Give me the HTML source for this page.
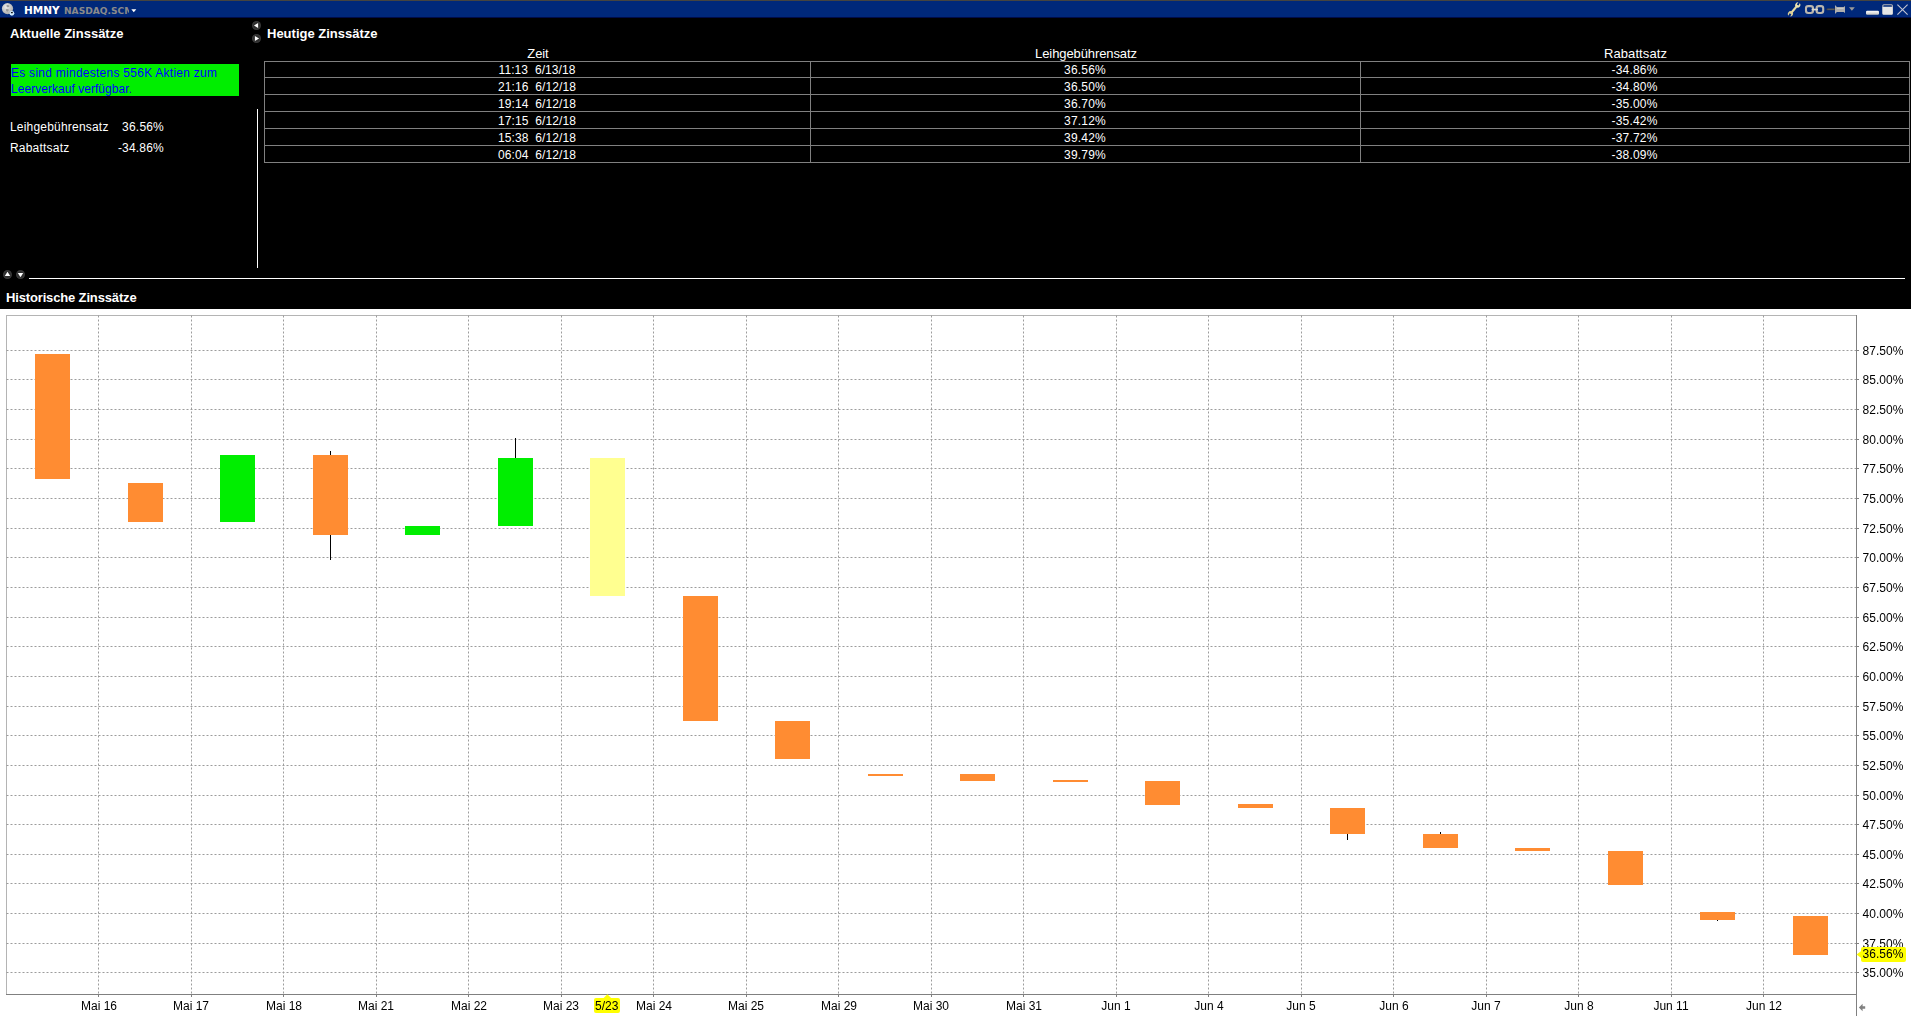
<!DOCTYPE html>
<html lang="de"><head><meta charset="utf-8"><title>HMNY</title>
<style>
html,body{margin:0;padding:0;}
body{width:1911px;height:1019px;overflow:hidden;background:#fff;position:relative;font-family:"Liberation Sans",sans-serif;font-size:12px;color:#fff;}
.abs{position:absolute;white-space:nowrap;}
.gfx{position:absolute;left:0;top:0;}
.top0{left:0;top:0;width:1911px;height:1px;background:#464440;}
.bar{left:0;top:1px;width:1911px;height:17px;background:#00287a;}
.bar2{left:0;top:17px;width:1911px;height:1px;background:#000c48;}
.panel{left:0;top:18px;width:1911px;height:291px;background:#000;}
.h{font-weight:bold;font-size:13px;line-height:16px;color:#fff;}
.t{font-size:12px;line-height:14px;color:#fff;letter-spacing:0.2px;}
.th{font-size:13px;line-height:14px;color:#fff;letter-spacing:-0.1px;}
.c{text-align:center;}
.yl{font-size:12px;line-height:14px;color:#000;left:1862.4px;letter-spacing:0.08px;}
.xl{font-size:12px;line-height:14px;color:#000;text-align:center;width:80px;}
.tbl{left:264px;top:61px;width:1646px;height:102px;}
.hl{background:#808080;height:1px;left:264px;width:1646px;}
.vl{background:#808080;width:1px;top:61px;height:102px;}
</style></head><body>
<div class="abs top0"></div><div class="abs bar"></div><div class="abs bar2"></div><div class="abs panel"></div>

<div class="abs" style="left:24px;top:4px;font-family:'DejaVu Sans','Liberation Sans',sans-serif;font-weight:bold;font-size:10.5px;line-height:13px;color:#fff;">HMNY</div>
<div class="abs" style="left:64px;top:5px;width:65px;overflow:hidden;font-family:'DejaVu Sans','Liberation Sans',sans-serif;font-weight:bold;font-size:9.1px;line-height:13px;color:#8a8a8a;">NASDAQ.SCM</div>
<div class="abs h" style="left:10px;top:26px;">Aktuelle Zinssätze</div>
<div class="abs h" style="left:267px;top:26px;">Heutige Zinssätze</div>
<div class="abs h" style="left:6px;top:290px;letter-spacing:-0.15px;">Historische Zinssätze</div>
<div class="abs" style="left:11px;top:64px;width:228px;height:32px;background:#00ee00;color:#0000ff;font-size:12px;line-height:16px;white-space:normal;letter-spacing:0.2px;padding-top:1px;box-sizing:border-box;"><span style="display:block;letter-spacing:0.26px;">Es sind mindestens 556K Aktien zum</span><span style="display:block;letter-spacing:0.04px;">Leerverkauf verfügbar.</span></div>
<div class="abs t" style="left:10px;top:120px;">Leihgebührensatz</div>
<div class="abs t" style="left:100px;top:120px;width:64px;text-align:right;">36.56%</div>
<div class="abs t" style="left:10px;top:141px;">Rabattsatz</div>
<div class="abs t" style="left:100px;top:141px;width:64px;text-align:right;">-34.86%</div>
<div class="abs" style="left:257px;top:109px;width:1px;height:159px;background:#fff;"></div>
<div class="abs" style="left:29px;top:278px;width:1876px;height:1px;background:#fff;"></div>
<div class="abs hl" style="top:61px;"></div>
<div class="abs hl" style="top:77px;"></div>
<div class="abs hl" style="top:94px;"></div>
<div class="abs hl" style="top:111px;"></div>
<div class="abs hl" style="top:128px;"></div>
<div class="abs hl" style="top:145px;"></div>
<div class="abs hl" style="top:162px;"></div>
<div class="abs vl" style="left:264px;"></div>
<div class="abs vl" style="left:810px;"></div>
<div class="abs vl" style="left:1360px;"></div>
<div class="abs vl" style="left:1909px;"></div>
<div class="abs th c" style="left:265px;width:546px;top:47px;">Zeit</div>
<div class="abs th c" style="left:811px;width:550px;top:47px;">Leihgebührensatz</div>
<div class="abs th c" style="left:1361px;width:549px;top:47px;letter-spacing:0.1px;">Rabattsatz</div>
<div class="abs t c" style="left:264px;width:546px;top:63px;white-space:pre;letter-spacing:0.08px;">11:13  6/13/18</div>
<div class="abs t c" style="left:810px;width:550px;top:63px;">36.56%</div>
<div class="abs t c" style="left:1360px;width:549px;top:63px;">-34.86%</div>
<div class="abs t c" style="left:264px;width:546px;top:80px;white-space:pre;letter-spacing:0.08px;">21:16  6/12/18</div>
<div class="abs t c" style="left:810px;width:550px;top:80px;">36.50%</div>
<div class="abs t c" style="left:1360px;width:549px;top:80px;">-34.80%</div>
<div class="abs t c" style="left:264px;width:546px;top:97px;white-space:pre;letter-spacing:0.08px;">19:14  6/12/18</div>
<div class="abs t c" style="left:810px;width:550px;top:97px;">36.70%</div>
<div class="abs t c" style="left:1360px;width:549px;top:97px;">-35.00%</div>
<div class="abs t c" style="left:264px;width:546px;top:114px;white-space:pre;letter-spacing:0.08px;">17:15  6/12/18</div>
<div class="abs t c" style="left:810px;width:550px;top:114px;">37.12%</div>
<div class="abs t c" style="left:1360px;width:549px;top:114px;">-35.42%</div>
<div class="abs t c" style="left:264px;width:546px;top:131px;white-space:pre;letter-spacing:0.08px;">15:38  6/12/18</div>
<div class="abs t c" style="left:810px;width:550px;top:131px;">39.42%</div>
<div class="abs t c" style="left:1360px;width:549px;top:131px;">-37.72%</div>
<div class="abs t c" style="left:264px;width:546px;top:148px;white-space:pre;letter-spacing:0.08px;">06:04  6/12/18</div>
<div class="abs t c" style="left:810px;width:550px;top:148px;">39.79%</div>
<div class="abs t c" style="left:1360px;width:549px;top:148px;">-38.09%</div>
<svg class="gfx" width="1911" height="1019" viewBox="0 0 1911 1019">
<g shape-rendering="crispEdges">
<rect x="6" y="315" width="1851" height="1" fill="#b4b4b4"/>
<rect x="6" y="315" width="1" height="680" fill="#b4b4b4"/>
<rect x="6" y="994" width="1851" height="1" fill="#808080"/>
<rect x="1856" y="315" width="1" height="701" fill="#808080"/>
</g>
<g stroke="#9c9c9c" stroke-width="1" stroke-dasharray="2 2" fill="none">
<line x1="6.5" y1="350.5" x2="1856.5" y2="350.5"/>
<line x1="6.5" y1="379.5" x2="1856.5" y2="379.5"/>
<line x1="6.5" y1="409.5" x2="1856.5" y2="409.5"/>
<line x1="6.5" y1="439.5" x2="1856.5" y2="439.5"/>
<line x1="6.5" y1="468.5" x2="1856.5" y2="468.5"/>
<line x1="6.5" y1="498.5" x2="1856.5" y2="498.5"/>
<line x1="6.5" y1="528.5" x2="1856.5" y2="528.5"/>
<line x1="6.5" y1="557.5" x2="1856.5" y2="557.5"/>
<line x1="6.5" y1="587.5" x2="1856.5" y2="587.5"/>
<line x1="6.5" y1="617.5" x2="1856.5" y2="617.5"/>
<line x1="6.5" y1="646.5" x2="1856.5" y2="646.5"/>
<line x1="6.5" y1="676.5" x2="1856.5" y2="676.5"/>
<line x1="6.5" y1="706.5" x2="1856.5" y2="706.5"/>
<line x1="6.5" y1="735.5" x2="1856.5" y2="735.5"/>
<line x1="6.5" y1="765.5" x2="1856.5" y2="765.5"/>
<line x1="6.5" y1="795.5" x2="1856.5" y2="795.5"/>
<line x1="6.5" y1="824.5" x2="1856.5" y2="824.5"/>
<line x1="6.5" y1="854.5" x2="1856.5" y2="854.5"/>
<line x1="6.5" y1="883.5" x2="1856.5" y2="883.5"/>
<line x1="6.5" y1="913.5" x2="1856.5" y2="913.5"/>
<line x1="6.5" y1="943.5" x2="1856.5" y2="943.5"/>
<line x1="6.5" y1="972.5" x2="1856.5" y2="972.5"/>
<line x1="98.5" y1="315.5" x2="98.5" y2="994.5"/>
<line x1="191.5" y1="315.5" x2="191.5" y2="994.5"/>
<line x1="283.5" y1="315.5" x2="283.5" y2="994.5"/>
<line x1="376.5" y1="315.5" x2="376.5" y2="994.5"/>
<line x1="468.5" y1="315.5" x2="468.5" y2="994.5"/>
<line x1="561.5" y1="315.5" x2="561.5" y2="994.5"/>
<line x1="653.5" y1="315.5" x2="653.5" y2="994.5"/>
<line x1="746.5" y1="315.5" x2="746.5" y2="994.5"/>
<line x1="838.5" y1="315.5" x2="838.5" y2="994.5"/>
<line x1="931.5" y1="315.5" x2="931.5" y2="994.5"/>
<line x1="1023.5" y1="315.5" x2="1023.5" y2="994.5"/>
<line x1="1116.5" y1="315.5" x2="1116.5" y2="994.5"/>
<line x1="1208.5" y1="315.5" x2="1208.5" y2="994.5"/>
<line x1="1301.5" y1="315.5" x2="1301.5" y2="994.5"/>
<line x1="1393.5" y1="315.5" x2="1393.5" y2="994.5"/>
<line x1="1486.5" y1="315.5" x2="1486.5" y2="994.5"/>
<line x1="1578.5" y1="315.5" x2="1578.5" y2="994.5"/>
<line x1="1671.5" y1="315.5" x2="1671.5" y2="994.5"/>
<line x1="1763.5" y1="315.5" x2="1763.5" y2="994.5"/>
</g>
<g shape-rendering="crispEdges" fill="#808080">
<rect x="98" y="994" width="1" height="3"/>
<rect x="191" y="994" width="1" height="3"/>
<rect x="283" y="994" width="1" height="3"/>
<rect x="376" y="994" width="1" height="3"/>
<rect x="468" y="994" width="1" height="3"/>
<rect x="561" y="994" width="1" height="3"/>
<rect x="653" y="994" width="1" height="3"/>
<rect x="746" y="994" width="1" height="3"/>
<rect x="838" y="994" width="1" height="3"/>
<rect x="931" y="994" width="1" height="3"/>
<rect x="1023" y="994" width="1" height="3"/>
<rect x="1116" y="994" width="1" height="3"/>
<rect x="1208" y="994" width="1" height="3"/>
<rect x="1301" y="994" width="1" height="3"/>
<rect x="1393" y="994" width="1" height="3"/>
<rect x="1486" y="994" width="1" height="3"/>
<rect x="1578" y="994" width="1" height="3"/>
<rect x="1671" y="994" width="1" height="3"/>
<rect x="1763" y="994" width="1" height="3"/>
<rect x="1856" y="350" width="3" height="1"/>
<rect x="1856" y="379" width="3" height="1"/>
<rect x="1856" y="409" width="3" height="1"/>
<rect x="1856" y="439" width="3" height="1"/>
<rect x="1856" y="468" width="3" height="1"/>
<rect x="1856" y="498" width="3" height="1"/>
<rect x="1856" y="528" width="3" height="1"/>
<rect x="1856" y="557" width="3" height="1"/>
<rect x="1856" y="587" width="3" height="1"/>
<rect x="1856" y="617" width="3" height="1"/>
<rect x="1856" y="646" width="3" height="1"/>
<rect x="1856" y="676" width="3" height="1"/>
<rect x="1856" y="706" width="3" height="1"/>
<rect x="1856" y="735" width="3" height="1"/>
<rect x="1856" y="765" width="3" height="1"/>
<rect x="1856" y="795" width="3" height="1"/>
<rect x="1856" y="824" width="3" height="1"/>
<rect x="1856" y="854" width="3" height="1"/>
<rect x="1856" y="883" width="3" height="1"/>
<rect x="1856" y="913" width="3" height="1"/>
<rect x="1856" y="943" width="3" height="1"/>
<rect x="1856" y="972" width="3" height="1"/>
</g>
<g shape-rendering="crispEdges">
<rect x="35" y="354" width="35" height="125" fill="#ff8c32"/>
<rect x="128" y="483" width="35" height="39" fill="#ff8c32"/>
<rect x="220" y="455" width="35" height="67" fill="#00ee00"/>
<rect x="330" y="451" width="1" height="4" fill="#000"/>
<rect x="330" y="535" width="1" height="25" fill="#000"/>
<rect x="313" y="455" width="35" height="80" fill="#ff8c32"/>
<rect x="405" y="526" width="35" height="9" fill="#00ee00"/>
<rect x="515" y="438" width="1" height="20" fill="#000"/>
<rect x="498" y="458" width="35" height="68" fill="#00ee00"/>
<rect x="590" y="458" width="35" height="138" fill="#ffff90"/>
<rect x="683" y="596" width="35" height="125" fill="#ff8c32"/>
<rect x="775" y="721" width="35" height="38" fill="#ff8c32"/>
<rect x="868" y="774" width="35" height="2" fill="#ff8c32"/>
<rect x="960" y="774" width="35" height="7" fill="#ff8c32"/>
<rect x="1053" y="780" width="35" height="2" fill="#ff8c32"/>
<rect x="1145" y="781" width="35" height="24" fill="#ff8c32"/>
<rect x="1238" y="804" width="35" height="4" fill="#ff8c32"/>
<rect x="1347" y="834" width="1" height="6" fill="#000"/>
<rect x="1330" y="808" width="35" height="26" fill="#ff8c32"/>
<rect x="1440" y="832" width="1" height="2" fill="#000"/>
<rect x="1423" y="834" width="35" height="14" fill="#ff8c32"/>
<rect x="1515" y="848" width="35" height="3" fill="#ff8c32"/>
<rect x="1608" y="851" width="35" height="34" fill="#ff8c32"/>
<rect x="1717" y="920" width="1" height="1" fill="#000"/>
<rect x="1700" y="912" width="35" height="8" fill="#ff8c32"/>
<rect x="1793" y="916" width="35" height="39" fill="#ff8c32"/>
</g>
</svg>
<svg class="gfx" width="1911" height="1019" viewBox="0 0 1911 1019">
<defs><radialGradient id="gl" cx="0.4" cy="0.35" r="0.7"><stop offset="0" stop-color="#ececec"/><stop offset="1" stop-color="#a8a8a8"/></radialGradient><linearGradient id="mn" x1="0" y1="0" x2="0" y2="1"><stop offset="0" stop-color="#ffffff"/><stop offset="1" stop-color="#c4c4c4"/></linearGradient></defs>
<circle cx="7.5" cy="8.6" r="5.6" fill="url(#gl)"/>
<path d="M6.5 5.2 q2.2 -0.6 3 0.8 q-0.6 1.4 -2.2 1.2 q-1.2 -0.6 -0.8 -2z M5.8 9.2 q1.8 -0.6 3 0.4 q0.2 1.6 -1.4 2.2 q-1.6 -0.6 -1.6 -2.6z" fill="#8c8c8c" opacity="0.8"/>
<circle cx="11.9" cy="13.3" r="2.4" fill="#cfeaff"/>
<rect x="10.9" y="12" width="2" height="1.2" rx="0.5" fill="#101010"/>
<path d="M131.3 9.3 L136.3 9.3 L133.8 12.3 Z" fill="#ffffff"/>
<g transform="translate(1794.1 9.4) rotate(-50)"><rect x="-4.6" y="-1.1" width="9.2" height="2.2" fill="#e6dca4"/><circle cx="5.7" cy="0" r="2.55" fill="#ece4b0"/><circle cx="-5.7" cy="0" r="2.55" fill="#dccf98"/><rect x="5.7" y="-0.95" width="3" height="1.9" fill="#00287a" transform="rotate(-15 5.7 0)"/><rect x="-8.7" y="-0.95" width="3" height="1.9" fill="#00287a" transform="rotate(-15 -5.7 0)"/></g>
<g stroke="#bab6ae" fill="none" stroke-width="2.1"><rect x="1806" y="6.1" width="7" height="6.9" rx="2.2"/><rect x="1816.6" y="6.1" width="6.6" height="6.9" rx="2.2"/></g>
<rect x="1811.6" y="8.7" width="6.4" height="1.7" fill="#d8d6d0"/>
<rect x="1826.4" y="8.6" width="9" height="1.6" rx="0.8" fill="#3c3c3c"/>
<rect x="1827.4" y="8.8" width="7" height="0.8" fill="#6e6e6e"/>
<path d="M1835 5 L1836.9 6.9 L1843.7 6.9 L1845 6 L1845 13 L1843.7 12 L1836.9 12 L1835 14 Z" fill="#aeaeae"/>
<rect x="1837" y="8" width="6.6" height="1" fill="#c8c8c8"/>
<path d="M1849 7.3 L1854.8 7.3 L1851.9 10.7 Z" fill="#9a9a9a"/>
<rect x="1866" y="10.8" width="13" height="4" rx="1.2" fill="url(#mn)"/>
<rect x="1882.8" y="4.7" width="9.6" height="9.6" rx="1" fill="none" stroke="#b4b4b8" stroke-width="1.1"/>
<rect x="1882.6" y="6.8" width="10" height="7.8" rx="0.8" fill="#e6e6e6"/>
<path d="M1897.4 4.6 L1907.6 14.6 M1907.6 4.6 L1897.4 14.6" stroke="#c4c6d2" stroke-width="1.1" fill="none"/>
<circle cx="256.5" cy="25.5" r="4.5" fill="#2e2e2e"/>
<circle cx="256.5" cy="25.5" r="3.9" fill="none" stroke="#3e3e3e" stroke-width="0.8"/>
<path d="M254.0 25.5 L258.1 22.9 L258.1 28.1 Z" fill="#fff"/>
<circle cx="256.5" cy="38.5" r="4.5" fill="#2e2e2e"/>
<circle cx="256.5" cy="38.5" r="3.9" fill="none" stroke="#3e3e3e" stroke-width="0.8"/>
<path d="M259.1 38.5 L254.9 35.9 L254.9 41.1 Z" fill="#fff"/>
<circle cx="7.5" cy="274.6" r="4.5" fill="#2e2e2e"/>
<circle cx="7.5" cy="274.6" r="3.9" fill="none" stroke="#3e3e3e" stroke-width="0.8"/>
<path d="M7.5 271.8 L4.8 276.0 L10.2 276.0 Z" fill="#fff"/>
<circle cx="20.5" cy="274.6" r="4.5" fill="#2e2e2e"/>
<circle cx="20.5" cy="274.6" r="3.9" fill="none" stroke="#3e3e3e" stroke-width="0.8"/>
<path d="M20.5 277.20000000000005 L17.8 273.0 L23.2 273.0 Z" fill="#fff"/>
<path d="M1858.9 1007.5 L1862.6 1003.8 L1862.6 1006.3 L1865.2 1006.3 L1865.2 1008.7 L1862.6 1008.7 L1862.6 1011.2 Z" fill="#808080"/>
<path d="M603.4 998.3 L607.4 994.2 L611.4 998.3 Z" fill="#ffff00"/>
<path d="M1856.6 954.5 L1861.2 951 L1861.2 958 Z" fill="#ffff00"/>
</svg>
<div class="abs" style="left:0;top:309px;width:1911px;height:710px;will-change:transform;"><div class="abs" style="left:0;top:-309px;width:1911px;height:1019px;">
<div class="abs yl" style="top:344px;">87.50%</div>
<div class="abs yl" style="top:373px;">85.00%</div>
<div class="abs yl" style="top:403px;">82.50%</div>
<div class="abs yl" style="top:433px;">80.00%</div>
<div class="abs yl" style="top:462px;">77.50%</div>
<div class="abs yl" style="top:492px;">75.00%</div>
<div class="abs yl" style="top:522px;">72.50%</div>
<div class="abs yl" style="top:551px;">70.00%</div>
<div class="abs yl" style="top:581px;">67.50%</div>
<div class="abs yl" style="top:611px;">65.00%</div>
<div class="abs yl" style="top:640px;">62.50%</div>
<div class="abs yl" style="top:670px;">60.00%</div>
<div class="abs yl" style="top:700px;">57.50%</div>
<div class="abs yl" style="top:729px;">55.00%</div>
<div class="abs yl" style="top:759px;">52.50%</div>
<div class="abs yl" style="top:789px;">50.00%</div>
<div class="abs yl" style="top:818px;">47.50%</div>
<div class="abs yl" style="top:848px;">45.00%</div>
<div class="abs yl" style="top:877px;">42.50%</div>
<div class="abs yl" style="top:907px;">40.00%</div>
<div class="abs yl" style="top:937px;">37.50%</div>
<div class="abs yl" style="top:966px;">35.00%</div>
<div class="abs xl" style="left:59px;top:999px;">Mai 16</div>
<div class="abs xl" style="left:151px;top:999px;">Mai 17</div>
<div class="abs xl" style="left:244px;top:999px;">Mai 18</div>
<div class="abs xl" style="left:336px;top:999px;">Mai 21</div>
<div class="abs xl" style="left:429px;top:999px;">Mai 22</div>
<div class="abs xl" style="left:521px;top:999px;">Mai 23</div>
<div class="abs xl" style="left:614px;top:999px;">Mai 24</div>
<div class="abs xl" style="left:706px;top:999px;">Mai 25</div>
<div class="abs xl" style="left:799px;top:999px;">Mai 29</div>
<div class="abs xl" style="left:891px;top:999px;">Mai 30</div>
<div class="abs xl" style="left:984px;top:999px;">Mai 31</div>
<div class="abs xl" style="left:1076px;top:999px;">Jun 1</div>
<div class="abs xl" style="left:1169px;top:999px;">Jun 4</div>
<div class="abs xl" style="left:1261px;top:999px;">Jun 5</div>
<div class="abs xl" style="left:1354px;top:999px;">Jun 6</div>
<div class="abs xl" style="left:1446px;top:999px;">Jun 7</div>
<div class="abs xl" style="left:1539px;top:999px;">Jun 8</div>
<div class="abs xl" style="left:1631px;top:999px;">Jun 11</div>
<div class="abs xl" style="left:1724px;top:999px;">Jun 12</div>
<div class="abs" style="left:1861px;top:947px;width:45px;height:15px;background:#ffff00;color:#000;font-size:12px;line-height:15px;border-radius:2px;text-align:center;text-indent:-1px;letter-spacing:0.08px;">36.56%</div>
<div class="abs" style="left:594px;top:998px;width:26px;height:15px;background:#ffff00;color:#000;font-size:12px;line-height:17px;text-align:center;border-radius:2px;text-indent:-0.5px;">5/23</div>
</div></div>
</body></html>
